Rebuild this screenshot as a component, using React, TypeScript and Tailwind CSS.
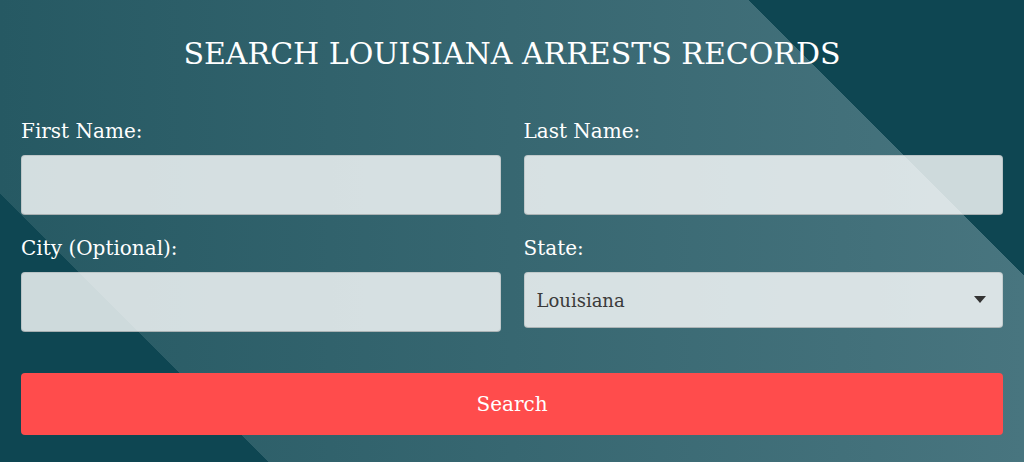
import { useState } from 'react';

// Simple search form for arrest records
type Field = {
  id: string;
  label: string;
};

const fields: Field[] = [
  { id: 'first-name', label: 'First Name:' },
  { id: 'last-name', label: 'Last Name:' },
  { id: 'city', label: 'City (Optional):' },
];

export default function App() {
  const [values, setValues] = useState<Record<string, string>>({});
  const [state, setState] = useState('Louisiana');

  const handleChange = (e: React.ChangeEvent<HTMLInputElement>) => {
    setValues({ ...values, [e.target.name]: e.target.value });
  };

  return (
    <div className="w-full h-[462px] overflow-hidden font-['DejaVu_Serif',serif] bg-[linear-gradient(45deg,#0e4652_190px,transparent_190px,transparent_856px,#0e4652_856px),linear-gradient(to_right,#265963,#48757f)]">
      <div className="px-[21px] pt-[36px]">
        <h1 className="text-center text-white text-[30px] leading-[36px] mb-[47px]">
          SEARCH LOUISIANA ARRESTS RECORDS
        </h1>

        <form
          className="grid grid-cols-2 gap-x-[23px] gap-y-[21px]"
          onSubmit={(e) => e.preventDefault()}
        >
          {fields.map((field) => (
            <div key={field.id}>
              <label htmlFor={field.id} className="block text-white text-[20px] leading-[24px] mb-[12px]">
                {field.label}
              </label>
              <input
                type="text"
                id={field.id}
                name={field.id}
                value={values[field.id] ?? ''}
                onChange={handleChange}
                className="block w-full h-[60px] px-[13px] rounded-[4px] bg-white/80 border border-black/10 border-b-black/20 text-[18px] text-[#333] outline-none"
              />
            </div>
          ))}

          {/* State select */}
          <div>
            <label htmlFor="state" className="block text-white text-[20px] leading-[24px] mb-[12px]">
              State:
            </label>
            <div className="relative">
              <select
                id="state"
                name="state"
                value={state}
                onChange={(e) => setState(e.target.value)}
                className="block w-full h-[56px] pl-[12px] pr-10 appearance-none rounded-[4px] bg-white/80 border border-black/10 border-b-black/20 text-[18px] text-[#3a3a3a] outline-none font-['DejaVu_Serif',serif]"
              >
                <option>Louisiana</option>
              </select>
              <svg
                className="absolute right-[17px] top-[24px] pointer-events-none"
                width="12"
                height="7"
                viewBox="0 0 12 7"
              >
                <path d="M0 0h12L6 7z" fill="#333" />
              </svg>
            </div>
          </div>

          <button
            type="submit"
            className="col-span-2 mt-[20px] h-[62px] rounded-[4px] bg-[#ff4c4c] text-white text-[20px]"
          >
            Search
          </button>
        </form>
      </div>
    </div>
  );
}
